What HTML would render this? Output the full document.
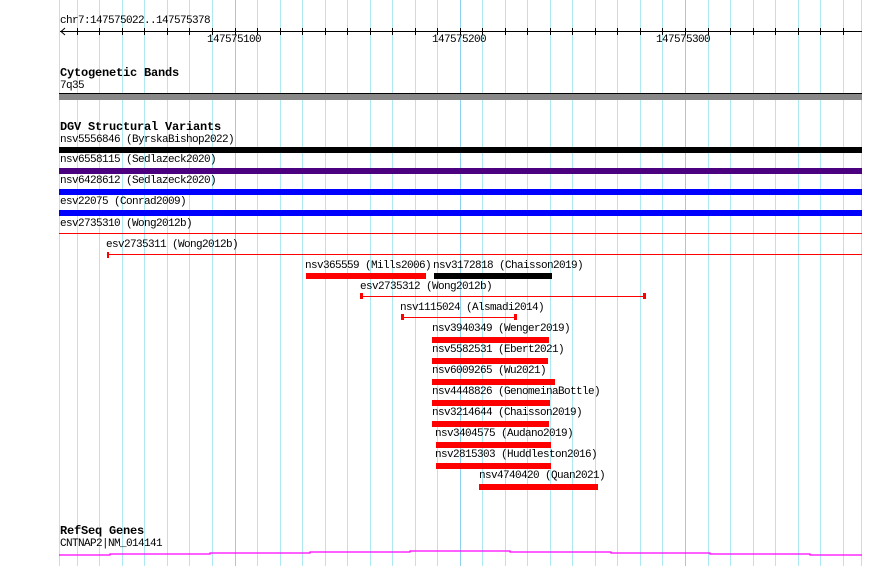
<!DOCTYPE html>
<html><head><style>
body{margin:0;width:890px;height:566px;background:#fff;position:relative;overflow:hidden;font-family:"Liberation Mono",monospace;font-size:11px;letter-spacing:-0.6px;color:#000}
.v{position:absolute;top:0;width:1px;height:566px;background:#aee9f2}
.d{background:#8fd0ec}
.t{position:absolute;white-space:pre;line-height:11px}
.b{font-weight:bold;font-size:12px;letter-spacing:-0.2px}
.r{position:absolute}
.tk{position:absolute;top:28px;width:1px;height:7px;background:#000}
</style></head><body>
<div class="v" style="left:59px"></div><div class="v" style="left:77px"></div><div class="v" style="left:99px"></div><div class="v" style="left:122px"></div><div class="v" style="left:144px"></div><div class="v" style="left:167px"></div><div class="v" style="left:189px"></div><div class="v" style="left:212px"></div><div class="v d" style="left:235px"></div><div class="v" style="left:257px"></div><div class="v" style="left:280px"></div><div class="v" style="left:302px"></div><div class="v" style="left:325px"></div><div class="v" style="left:347px"></div><div class="v" style="left:370px"></div><div class="v" style="left:392px"></div><div class="v" style="left:415px"></div><div class="v" style="left:437px"></div><div class="v d" style="left:460px"></div><div class="v" style="left:482px"></div><div class="v" style="left:505px"></div><div class="v" style="left:527px"></div><div class="v" style="left:550px"></div><div class="v" style="left:572px"></div><div class="v" style="left:595px"></div><div class="v" style="left:617px"></div><div class="v" style="left:640px"></div><div class="v" style="left:662px"></div><div class="v d" style="left:685px"></div><div class="v" style="left:708px"></div><div class="v" style="left:730px"></div><div class="v" style="left:753px"></div><div class="v" style="left:775px"></div><div class="v" style="left:798px"></div><div class="v" style="left:820px"></div><div class="v" style="left:843px"></div><div class="v" style="left:861px"></div>

<div class="t" style="left:60px;top:16px">chr7:147575022..147575378</div>
<div class="r" style="left:60px;top:31px;width:802px;height:1px;background:#000"></div>
<svg class="r" style="left:59px;top:27px" width="10" height="9"><polyline points="6,1 2,4.5 6,8" fill="none" stroke="#000" stroke-width="1"/></svg>
<div class="tk" style="left:77px"></div><div class="tk" style="left:99px"></div><div class="tk" style="left:122px"></div><div class="tk" style="left:144px"></div><div class="tk" style="left:167px"></div><div class="tk" style="left:189px"></div><div class="tk" style="left:212px"></div><div class="tk" style="left:235px"></div><div class="tk" style="left:257px"></div><div class="tk" style="left:280px"></div><div class="tk" style="left:302px"></div><div class="tk" style="left:325px"></div><div class="tk" style="left:347px"></div><div class="tk" style="left:370px"></div><div class="tk" style="left:392px"></div><div class="tk" style="left:415px"></div><div class="tk" style="left:437px"></div><div class="tk" style="left:460px"></div><div class="tk" style="left:482px"></div><div class="tk" style="left:505px"></div><div class="tk" style="left:527px"></div><div class="tk" style="left:550px"></div><div class="tk" style="left:572px"></div><div class="tk" style="left:595px"></div><div class="tk" style="left:617px"></div><div class="tk" style="left:640px"></div><div class="tk" style="left:662px"></div><div class="tk" style="left:685px"></div><div class="tk" style="left:708px"></div><div class="tk" style="left:730px"></div><div class="tk" style="left:753px"></div><div class="tk" style="left:775px"></div><div class="tk" style="left:798px"></div><div class="tk" style="left:820px"></div><div class="tk" style="left:843px"></div>
<div class="t" style="left:207px;top:35px">147575100</div>
<div class="t" style="left:432px;top:35px">147575200</div>
<div class="t" style="left:656px;top:35px">147575300</div>

<div class="t b" style="left:60px;top:68px">Cytogenetic Bands</div>
<div class="t" style="left:60px;top:81px">7q35</div>
<div class="r" style="left:59px;top:93px;width:803px;height:7px;background:#888;border-top:1px solid #000;box-sizing:border-box"></div>

<div class="t b" style="left:60px;top:122px">DGV Structural Variants</div>
<div class="t" style="left:60px;top:135px">nsv5556846 (ByrskaBishop2022)</div>
<div class="r" style="left:59px;top:147px;width:803px;height:6px;background:#000"></div>
<div class="t" style="left:60px;top:155px">nsv6558115 (Sedlazeck2020)</div>
<div class="r" style="left:59px;top:168px;width:803px;height:6px;background:#4b0080"></div>
<div class="t" style="left:60px;top:176px">nsv6428612 (Sedlazeck2020)</div>
<div class="r" style="left:59px;top:189px;width:803px;height:6px;background:#0000ff"></div>
<div class="t" style="left:60px;top:197px">esv22075 (Conrad2009)</div>
<div class="r" style="left:59px;top:210px;width:803px;height:6px;background:#0000ff"></div>
<div class="t" style="left:60px;top:219px">esv2735310 (Wong2012b)</div>
<div class="r" style="left:59px;top:233px;width:803px;height:1px;background:#f00"></div>
<div class="t" style="left:106px;top:240px">esv2735311 (Wong2012b)</div>
<div class="r" style="left:108px;top:254px;width:754px;height:1px;background:#f00"></div>
<div class="r" style="left:107px;top:252px;width:2px;height:6px;background:#f00"></div>

<div class="t" style="left:305px;top:261px">nsv365559 (Mills2006)</div>
<div class="r" style="left:306px;top:273px;width:120px;height:6px;background:#f00"></div>
<div class="t" style="left:433px;top:261px">nsv3172818 (Chaisson2019)</div>
<div class="r" style="left:434px;top:273px;width:118px;height:6px;background:#000"></div>

<div class="t" style="left:360px;top:282px">esv2735312 (Wong2012b)</div>
<div class="r" style="left:361px;top:296px;width:284px;height:1px;background:#f00"></div>
<div class="r" style="left:360px;top:293px;width:3px;height:6px;background:#f00"></div>
<div class="r" style="left:643px;top:293px;width:3px;height:6px;background:#f00"></div>

<div class="t" style="left:400px;top:303px">nsv1115024 (Alsmadi2014)</div>
<div class="r" style="left:402px;top:317px;width:114px;height:1px;background:#f00"></div>
<div class="r" style="left:401px;top:314px;width:3px;height:6px;background:#f00"></div>
<div class="r" style="left:514px;top:314px;width:3px;height:6px;background:#f00"></div>

<div class="t" style="left:432px;top:324px">nsv3940349 (Wenger2019)</div>
<div class="r" style="left:432px;top:337px;width:117px;height:6px;background:#f00"></div>
<div class="t" style="left:432px;top:345px">nsv5582531 (Ebert2021)</div>
<div class="r" style="left:432px;top:358px;width:116px;height:6px;background:#f00"></div>
<div class="t" style="left:432px;top:366px">nsv6009265 (Wu2021)</div>
<div class="r" style="left:432px;top:379px;width:123px;height:6px;background:#f00"></div>
<div class="t" style="left:432px;top:387px">nsv4448826 (GenomeinaBottle)</div>
<div class="r" style="left:432px;top:400px;width:118px;height:6px;background:#f00"></div>
<div class="t" style="left:432px;top:408px">nsv3214644 (Chaisson2019)</div>
<div class="r" style="left:432px;top:421px;width:117px;height:6px;background:#f00"></div>
<div class="t" style="left:435px;top:429px">nsv3404575 (Audano2019)</div>
<div class="r" style="left:436px;top:442px;width:115px;height:6px;background:#f00"></div>
<div class="t" style="left:435px;top:450px">nsv2815303 (Huddleston2016)</div>
<div class="r" style="left:436px;top:463px;width:115px;height:6px;background:#f00"></div>
<div class="t" style="left:479px;top:471px">nsv4740420 (Quan2021)</div>
<div class="r" style="left:479px;top:484px;width:119px;height:6px;background:#f00"></div>

<div class="t b" style="left:60px;top:526px">RefSeq Genes</div>
<div class="t" style="left:60px;top:539px">CNTNAP2|NM_014141</div>
<svg class="r" style="left:0;top:0" width="890" height="566"><polyline fill="none" stroke="#f0f" stroke-width="1.2" points="59,555 110,555 110,554 210,554 210,553 310,553 310,552 410,552 410,551 510,551 510,552 611,552 611,553 710,553 710,554 810,554 810,555 862,555"/></svg>
</body></html>
